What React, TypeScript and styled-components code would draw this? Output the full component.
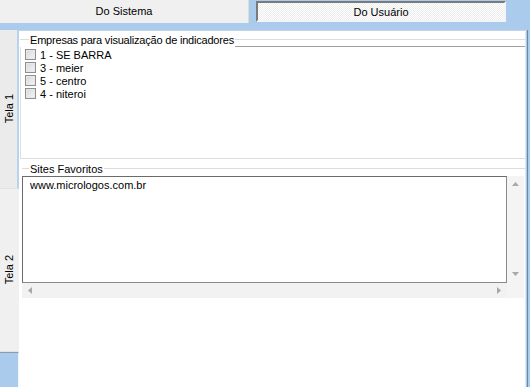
import React from "react";
import styled, { createGlobalStyle } from "styled-components";

const Global = createGlobalStyle`
  html, body { margin: 0; padding: 0; background: #fff; }
  body { font-family: "Liberation Sans", Arial, sans-serif; font-size: 11px; color: #000; }
`;

const BLUE = "#abcbed";

const Root = styled.div`
  width: 530px;
  height: 387px;
  background: ${BLUE};
  display: flex;
  flex-direction: column;
  overflow: hidden;
`;

const TopBar = styled.div`
  height: 23px;
  display: flex;
  align-items: stretch;
`;

const Tab = styled.div`
  width: 248px;
  background: #f0f0f0;
  border-right: 1px solid #dcdcdc;
  display: flex;
  align-items: center;
  justify-content: center;
  padding-bottom: 1px;
`;

const TabGap = styled.div`
  width: 7px;
`;

const ActiveTab = styled.div`
  width: 246px;
  margin: 1px 0 1px;
  border-top: 2px solid #7a7a7a;
  border-left: 2px solid #7a7a7a;
  border-right: 2px solid #f4f4f4;
  border-bottom: 2px solid #f4f4f4;
  background: repeating-conic-gradient(#ffffff 0 25%, #ededed 0 50%) 0 0 / 2px 2px;
  display: flex;
  align-items: center;
  justify-content: center;
`;

const Band = styled.div`
  height: 7px;
`;

const Body = styled.div`
  flex: 1;
  display: flex;
  min-height: 0;
`;

const SideTabs = styled.div`
  width: 19px;
  display: flex;
  flex-direction: column;
`;

const SideTab = styled.div<{ $h: number; $active?: boolean }>`
  height: ${(p) => p.$h}px;
  background: ${(p) => (p.$active ? "#ebebeb" : "#f0f0f0")};
  border-right: 2px solid ${(p) => (p.$active ? "#b9d2ee" : "#f0f0f0")};
  border-bottom: 1px solid #e2e2e2;
  display: flex;
  align-items: center;
  justify-content: center;
`;

const VText = styled.span`
  writing-mode: vertical-rl;
  transform: rotate(180deg);
  white-space: nowrap;
`;

const SideFill = styled.div`
  flex: 1;
  background: ${BLUE};
  border-top: 1px solid #8a9bb0;
  border-right: 1px solid #f4f4f4;
`;

const Main = styled.div`
  flex: 1;
  background: #fff;
  border-top: 1px solid #c4d4e6;
  display: flex;
  flex-direction: column;
  padding: 2px 0 0 1px;
`;

const RightEdge = styled.div`
  width: 5px;
  background: linear-gradient(
    to right,
    #dde8f4 0 1px,
    ${BLUE} 1px 2px,
    #6d86a6 2px 3px,
    ${BLUE} 3px 5px
  );
`;

const LegendRow = styled.div`
  height: 14px;
  display: flex;
  align-items: stretch;
`;

const LegendLead = styled.div<{ $w: number }>`
  width: ${(p) => p.$w}px;
  background: linear-gradient(#dcdcdc, #dcdcdc) 0 6px / 100% 1px no-repeat;
`;

const LegendText = styled.div<{ $tight?: boolean }>`
  padding: 0 1px;
  display: flex;
  align-items: center;
  white-space: nowrap;
  letter-spacing: ${(p) => (p.$tight ? "-0.2px" : "0")};
`;

const LegendLine = styled.div<{ $under?: boolean }>`
  flex: 1;
  background: linear-gradient(#dcdcdc, #dcdcdc) 0 6px / 100% 1px no-repeat;
  border-bottom: 1px solid ${(p) => (p.$under ? "#a0a0a0" : "transparent")};
`;

const Group1 = styled.div`
  display: flex;
  flex-direction: column;
`;

const CheckList = styled.div`
  height: 110px;
  border-left: 1px solid #e0e0e0;
  border-bottom: 1px solid #dcdcdc;
  padding: 1px 0 0 4px;
  display: flex;
  flex-direction: column;
`;

const CheckRow = styled.label`
  height: 13px;
  display: flex;
  align-items: center;
  gap: 4px;
`;

const Box = styled.span`
  width: 9px;
  height: 9px;
  border: 1px solid #8f8f8f;
  background: linear-gradient(135deg, #d6d6d6, #f6f6f6);
  box-shadow: inset 0 0 0 1px #e8e8e8;
`;

const Group2 = styled.div`
  margin-top: 3px;
  padding-left: 2px;
  display: flex;
  flex-direction: column;
`;

const MemoFrame = styled.div`
  display: grid;
  grid-template-columns: 485px 17px;
  grid-template-rows: 107px 15px;
`;

const Memo = styled.div`
  border: 1px solid #6b6b6b;
  border-right-color: #8a8a8a;
  border-bottom-color: #8a8a8a;
  padding: 2px 7px;
`;

const VScroll = styled.div`
  background: #f4f4f4;
  display: flex;
  flex-direction: column;
  justify-content: space-between;
  align-items: center;
  padding: 6px 0 7px;
`;

const HScroll = styled.div`
  background: #f2f2f2;
  display: flex;
  justify-content: space-between;
  align-items: center;
  padding: 0 6px 0 6px;
`;

const Corner = styled.div`
  background: #f4f4f4;
`;

const Arrow = ({ dir }: { dir: "up" | "down" | "left" | "right" }) => {
  const pts: Record<string, string> = {
    up: "0,4 3.5,0 7,4",
    down: "0,0 3.5,4 7,0",
    left: "4,0 0,3.5 4,7",
    right: "0,0 4,3.5 0,7",
  };
  const horiz = dir === "left" || dir === "right";
  return (
    <svg width={horiz ? 4 : 7} height={horiz ? 7 : 4} viewBox={horiz ? "0 0 4 7" : "0 0 7 4"}>
      <polygon points={pts[dir]} fill="#a8a8a8" />
    </svg>
  );
};

const empresas = ["1 - SE BARRA", "3 - meier", "5 - centro", "4 - niteroi"];

export default function App() {
  return (
    <Root>
      <Global />
      <TopBar>
        <Tab>Do Sistema</Tab>
        <TabGap />
        <ActiveTab>Do Usuário</ActiveTab>
      </TopBar>
      <Band />
      <Body>
        <SideTabs>
          <SideTab $h={158} $active>
            <VText>Tela 1</VText>
          </SideTab>
          <SideTab $h={162}>
            <VText>Tela 2</VText>
          </SideTab>
          <SideFill />
        </SideTabs>
        <Main>
          <Group1>
            <LegendRow>
              <LegendLead $w={9} />
              <LegendText $tight>Empresas para visualização de indicadores</LegendText>
              <LegendLine $under />
            </LegendRow>
            <CheckList>
              {empresas.map((e) => (
                <CheckRow key={e}>
                  <Box />
                  {e}
                </CheckRow>
              ))}
            </CheckList>
          </Group1>
          <Group2>
            <LegendRow>
              <LegendLead $w={7} />
              <LegendText>Sites Favoritos</LegendText>
              <LegendLine />
            </LegendRow>
            <MemoFrame>
              <Memo>www.micrologos.com.br</Memo>
              <VScroll>
                <Arrow dir="up" />
                <Arrow dir="down" />
              </VScroll>
              <HScroll>
                <Arrow dir="left" />
                <Arrow dir="right" />
              </HScroll>
              <Corner />
            </MemoFrame>
          </Group2>
        </Main>
        <RightEdge />
      </Body>
    </Root>
  );
}
